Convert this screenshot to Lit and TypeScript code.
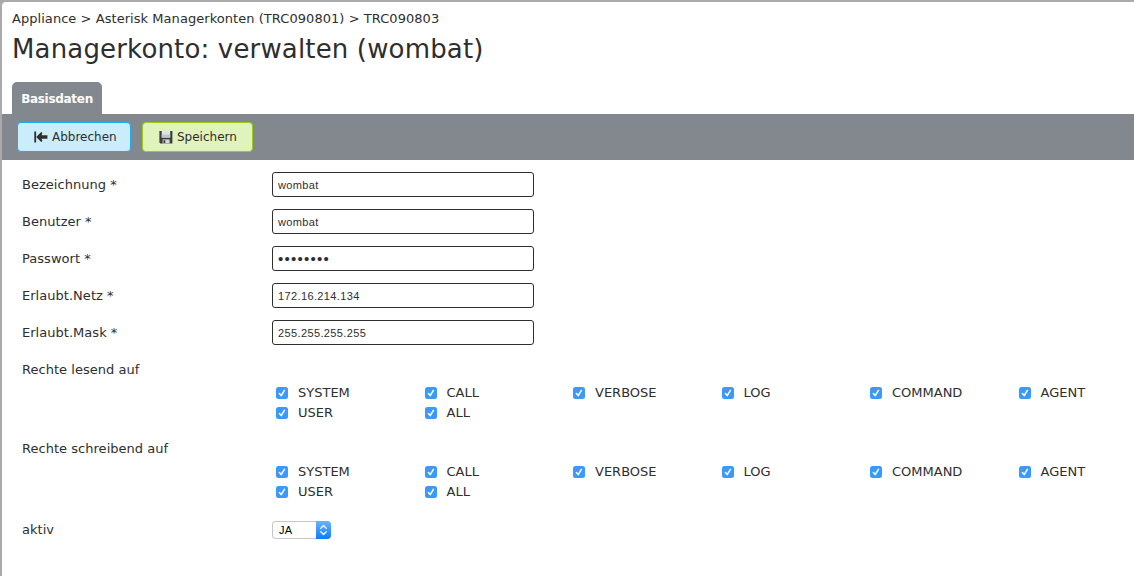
import { LitElement, html, css, svg } from "lit";
import { customElement, property } from "lit/decorators.js";

const RIGHTS = ["SYSTEM", "CALL", "VERBOSE", "LOG", "COMMAND", "AGENT", "USER", "ALL"];

const FIELDS = [
  { label: "Bezeichnung *", value: "wombat" },
  { label: "Benutzer *", value: "wombat" },
  { label: "Passwort *", value: "••••••••", secret: true },
  { label: "Erlaubt.Netz *", value: "172.16.214.134" },
  { label: "Erlaubt.Mask *", value: "255.255.255.255" },
];

@customElement("rights-grid")
class RightsGrid extends LitElement {
  @property({ attribute: false }) rights: string[] = [];

  static styles = css`
    :host { display: block; }
    .grid { display: grid; grid-template-columns: repeat(6, 148.5px); grid-auto-rows: 20px; }
    .item { display: flex; align-items: center; gap: 10px; white-space: nowrap; }
    .box { display: block; flex: none; width: 12px; height: 12px; }
  `;

  render() {
    return html`<div class="grid">
      ${this.rights.map(
        (name) => html`<label class="item">
          <svg class="box" viewBox="0 0 12 12">
            <rect width="12" height="12" rx="2.5" fill="#3b99fc" />
            <path d="M3.4 6.6 5.2 8.6 8.4 3.4" fill="none" stroke="#fff" stroke-width="1.5" stroke-linecap="round" stroke-linejoin="round" />
          </svg>
          <span>${name}</span>
        </label>`
      )}
    </div>`;
  }
}

@customElement("app-root")
class AppRoot extends LitElement {
  static styles = css`
    :host {
      display: block;
      height: 576px;
      overflow: hidden;
      background: #aaa;
      color: #2e2e2e;
      font: 13px/20px "DejaVu Sans", Verdana, sans-serif;
    }
    .page {
      box-sizing: border-box;
      height: 574px;
      margin-left: 2px;
      background: #fff;
      border-top-left-radius: 4px;
    }
    .frame { padding-top: 2px; }
    .head { box-sizing: border-box; height: 80px; padding: 7px 10px 0; white-space: nowrap; }
    .crumbs { letter-spacing: 0.05px; }
    .title { margin: 3px 0 0; font-size: 26px; line-height: 34px; font-weight: 400; letter-spacing: 0.16px; }
    .tabs { display: flex; height: 32px; padding-left: 10px; }
    .tab {
      box-sizing: border-box;
      width: 90px;
      padding-top: 7px;
      border-radius: 5px 5px 0 0;
      background: #82888d;
      color: #fff;
      font-weight: 700;
      font-size: 12px;
      letter-spacing: -0.3px;
      text-align: center;
      white-space: nowrap;
    }
    .bar {
      box-sizing: border-box;
      display: flex;
      gap: 11px;
      height: 46px;
      padding: 8px 15px;
      background: #82888d;
    }
    .btn {
      box-sizing: border-box;
      display: flex;
      align-items: center;
      gap: 4px;
      height: 30px;
      padding: 0 0 0 16px;
      border: 1px solid #1caaf0;
      border-radius: 4px;
      background: #cbecfa;
      color: inherit;
      font: inherit;
      font-size: 12px;
      line-height: 20px;
      white-space: nowrap;
    }
    .cancel { width: 114px; }
    .save { width: 111px; border-color: #96cf14; background: #e1f3bd; }
    .icon { display: block; flex: none; width: 14px; height: 14px; }
    .form { padding: 12px 20px 0; }
    .row { display: grid; grid-template-columns: 250px 262px; height: 37px; }
    .label { line-height: 25px; white-space: nowrap; letter-spacing: 0.03px; }
    .field {
      box-sizing: border-box;
      height: 25px;
      padding: 1px 0 0 5px;
      border: 1px solid #2e2e2e;
      border-radius: 3px;
      font: 11px/22px "Liberation Sans", Arial, sans-serif;
      letter-spacing: 0.38px;
    }
    .secret { font-size: 15px; letter-spacing: 1.25px; }
    .group { height: 79px; }
    .rights { margin: 1px 0 0 254px; }
    .active { padding-top: 2px; }
    .select {
      box-sizing: border-box;
      display: flex;
      justify-content: space-between;
      width: 59px;
      height: 18px;
      margin-top: 4px;
      padding-left: 7px;
      border-radius: 4px;
      overflow: hidden;
      box-shadow: inset 0 0 0 1px #c6c6c6;
      color: #000;
      font: 11px/18px "Liberation Sans", Arial, sans-serif;
      letter-spacing: 0.3px;
    }
    .arrows { display: block; width: 15px; height: 18px; background: linear-gradient(#6cb3fa, #087eff); }
  `;

  private cancelIcon() {
    return svg`<svg class="icon" viewBox="0 0 14 14">
      <path d="M1.2 1.5v11" stroke="#2e2e2e" stroke-width="1.8" />
      <path d="M2.2 7 7.2 2 8.4 3 7.6 5.3H13.4V8.7H7.6L8.4 11 7.2 12Z" fill="#2e2e2e" />
    </svg>`;
  }

  private saveIcon() {
    return svg`<svg class="icon" viewBox="0 0 14 14">
      <path d="M.4 1H13.4V13.4H1.4L.4 12.4Z" fill="#3b3d3f" />
      <path d="M2.7 1H11.2V7.6H2.7Z" fill="#dfe3e2" />
      <path d="M2.7 4.6H11.2V7.6H2.7Z" fill="#c2c6c5" />
      <path d="M3.6 9.4H10.6V13.4H3.6Z" fill="#d6dbd5" />
      <path d="M4.5 10.2H6.3V13H4.5Z" fill="#3b3d3f" />
    </svg>`;
  }

  render() {
    return html`<div class="frame"><main class="page">
      <header class="head">
        <div class="crumbs">Appliance &gt; Asterisk Managerkonten (TRC090801) &gt; TRC090803</div>
        <h1 class="title">Managerkonto: verwalten (wombat)</h1>
      </header>
      <nav class="tabs"><div class="tab">Basisdaten</div></nav>
      <div class="bar">
        <button class="btn cancel">${this.cancelIcon()}<span>Abbrechen</span></button>
        <button class="btn save">${this.saveIcon()}<span>Speichern</span></button>
      </div>
      <div class="form">
        ${FIELDS.map(
          (f) => html`<div class="row">
            <div class="label">${f.label}</div>
            <div class="field ${f.secret ? "secret" : ""}">${f.value}</div>
          </div>`
        )}
        <div class="group">
          <div class="label">Rechte lesend auf</div>
          <rights-grid class="rights" .rights=${RIGHTS}></rights-grid>
        </div>
        <div class="group">
          <div class="label">Rechte schreibend auf</div>
          <rights-grid class="rights" .rights=${RIGHTS}></rights-grid>
        </div>
        <div class="row active">
          <div class="label">aktiv</div>
          <div class="select"><span>JA</span>
            <svg class="arrows" viewBox="0 0 15 18">
              <path d="M4.8 7.2 7.5 4.5 10.2 7.2M4.8 10.8 7.5 13.5 10.2 10.8" fill="none" stroke="#fff" stroke-width="1.3" stroke-linecap="round" stroke-linejoin="round" />
            </svg>
          </div>
        </div>
      </div>
    </main></div>`;
  }
}
